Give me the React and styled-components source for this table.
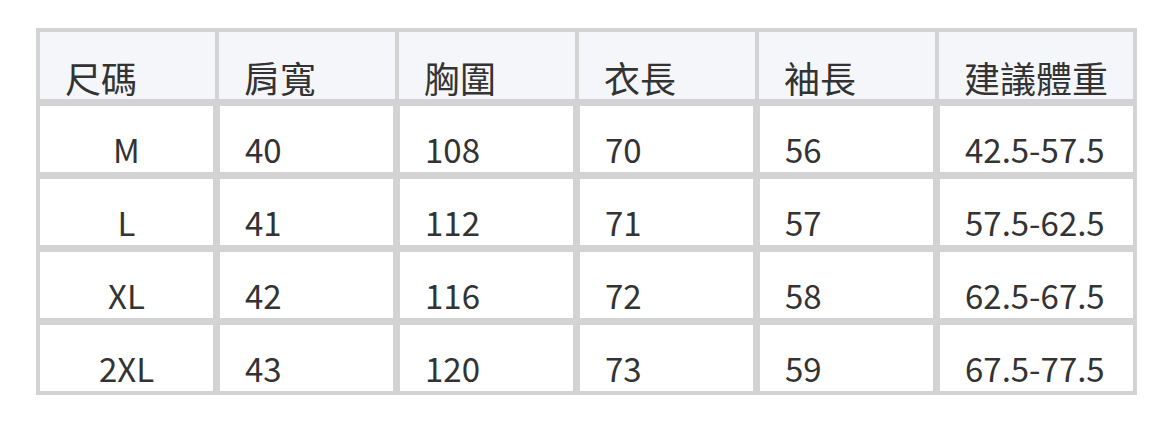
import React from "react";
import styled, { createGlobalStyle } from "styled-components";

const GlobalStyle = createGlobalStyle`
  body {
    margin: 0;
    background: #ffffff;
    font-family: "Noto Sans CJK TC", "Noto Sans", sans-serif;
  }
`;

const Page = styled.div`
  width: 1172px;
  height: 422px;
  padding: 28px 0 0 36px;
  box-sizing: border-box;
`;

const Table = styled.table`
  border-collapse: separate;
  border-spacing: 0;
  table-layout: fixed;
  width: 1101px;
  border: 4px solid #d3d3d3;
  color: #333333;
  font-size: 33px;
  line-height: 40px;
`;

const HeadCell = styled.th`
  background: #f5f6fa;
  font-weight: 400;
  font-size: 36px;
  text-align: left;
  padding: 25px 0 2px 25px;
  border-left: 2px solid #d3d3d3;
  border-right: 2px solid #d3d3d3;
  border-bottom: 3px solid #d3d3d3;
  white-space: nowrap;

  &:first-child {
    border-left: none;
  }
  &:last-child {
    border-right: none;
  }
`;

const Cell = styled.td`
  background: #ffffff;
  text-align: ${({ $center }) => ($center ? "center" : "left")};
  padding: ${({ $center }) => ($center ? "23px 0 3px 0" : "23px 0 3px 25px")};
  border-left: 3px solid #d3d3d3;
  border-right: 4px solid #d3d3d3;
  border-top: 4px solid #d3d3d3;
  border-bottom: 3px solid #d3d3d3;
  white-space: nowrap;

  &:first-child {
    border-left: none;
  }
  &:last-child {
    border-right: none;
  }
  tr:last-child > & {
    border-bottom: none;
  }
`;

const columns = [
  { label: "尺碼", width: 177 },
  { label: "肩寬", width: 180 },
  { label: "胸圍", width: 180 },
  { label: "衣長", width: 180 },
  { label: "袖長", width: 180 },
  { label: "建議體重", width: 196 },
];

const rows = [
  ["M", "40", "108", "70", "56", "42.5-57.5"],
  ["L", "41", "112", "71", "57", "57.5-62.5"],
  ["XL", "42", "116", "72", "58", "62.5-67.5"],
  ["2XL", "43", "120", "73", "59", "67.5-77.5"],
];

export default function App() {
  return (
    <>
      <GlobalStyle />
      <Page>
        <Table>
          <colgroup>
            {columns.map((col) => (
              <col key={col.label} style={{ width: col.width }} />
            ))}
          </colgroup>
          <thead>
            <tr>
              {columns.map((col) => (
                <HeadCell key={col.label}>{col.label}</HeadCell>
              ))}
            </tr>
          </thead>
          <tbody>
            {rows.map((row) => (
              <tr key={row[0]}>
                {row.map((value, i) => (
                  <Cell key={i} $center={i === 0}>
                    {value}
                  </Cell>
                ))}
              </tr>
            ))}
          </tbody>
        </Table>
      </Page>
    </>
  );
}
